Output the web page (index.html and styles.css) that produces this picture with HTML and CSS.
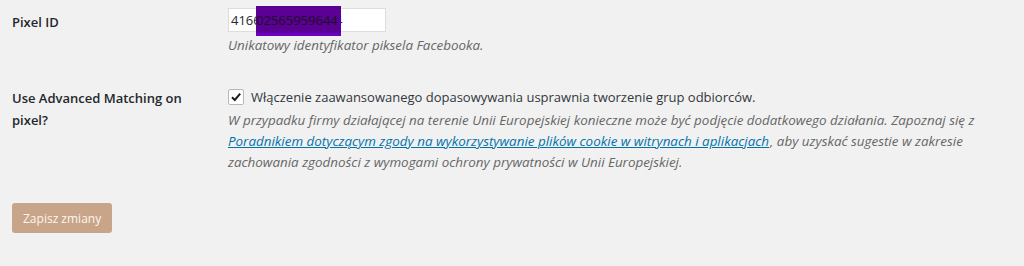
FILE: index.html
```html
<!DOCTYPE html>
<html lang="pl">
<head>
    <meta charset="UTF-8">
    <title>Ustawienia piksela</title>
    <link rel="stylesheet" href="styles.css">
</head>
<body>
    <form class="settings">
        <div class="row">
            <div class="label">Pixel ID</div>
            <div class="field">
                <div class="input-wrap">
                    <input class="text-input" type="text" value="416602565959644">
                    <span class="redact">02565959644</span>
                </div>
                <p class="desc">Unikatowy identyfikator piksela Facebooka.</p>
            </div>
        </div>

        <div class="row row-check">
            <div class="label">Use Advanced Matching on pixel?</div>
            <div class="field">
                <label class="check">
                    <span class="box">
                        <svg width="12" height="12" viewBox="0 0 12 12"><path d="M2 6.2 L4.8 9 L10.2 2.6" fill="none" stroke="#1e1e1e" stroke-width="2"/></svg>
                    </span>
                    Włączenie zaawansowanego dopasowywania usprawnia tworzenie grup odbiorców.
                </label>
                <p class="desc">W przypadku firmy działającej na terenie Unii Europejskiej konieczne może być podjęcie dodatkowego działania. Zapoznaj się z<br><a href="#">Poradnikiem dotyczącym zgody na wykorzystywanie plików cookie w witrynach i aplikacjach</a>, aby uzyskać sugestie w zakresie zachowania zgodności z wymogami ochrony prywatności w Unii Europejskiej.</p>
            </div>
        </div>

        <button class="save" type="button">Zapisz zmiany</button>
    </form>
</body>
</html>
```

FILE: styles.css
```css
body {
    margin: 0;
    background: #f1f1f1;
    font-family: "Open Sans", sans-serif;
    font-size: 13px;
    color: #23282d;
}
.settings {
    padding: 0 12px;
}
.row {
    display: flex;
    padding-top: 8px;
}
.label {
    width: 216px;
    font-weight: 600;
    font-size: 13px;
    line-height: 22px;
    padding-top: 3px;
}
.field {
    flex: 1;
}
.input-wrap {
    position: relative;
    width: 158px;
}
.text-input {
    box-sizing: border-box;
    width: 158px;
    height: 24px;
    margin: 0;
    padding: 0 2px;
    border: 1px solid #ddd;
    background: #fff;
    font-family: "Open Sans", sans-serif;
    font-size: 13px;
    color: #23282d;
    outline: none;
}
.redact {
    position: absolute;
    left: 28px;
    top: -2px;
    width: 85px;
    height: 30px;
    box-sizing: border-box;
    padding-top: 5px;
    background: #5b0094;
    border-bottom: 3px solid #6a00c4;
    font-size: 13px;
    color: #1a1024;
    overflow: hidden;
    white-space: nowrap;
}
.desc {
    margin: 3px 0 0;
    font-style: italic;
    color: #666;
    line-height: 21px;
    font-size: 13.4px;
}
.row-check {
    padding-top: 31px;
}
.row-check .label {
    padding-top: 0;
    width: 190px;
    margin-right: 26px;
}
.check {
    display: flex;
    align-items: center;
    gap: 7px;
    line-height: 20px;
    color: #32373c;
}
.box {
    box-sizing: border-box;
    width: 16px;
    height: 16px;
    border: 1px solid #b4b9be;
    border-radius: 2px;
    background: #fff;
    display: flex;
    align-items: center;
    justify-content: center;
}
.desc a {
    color: #0073aa;
    margin-right: 1px;
}
.save {
    margin-top: 30px;
    padding: 0 11px;
    height: 30px;
    border: 0;
    border-radius: 3px;
    background: #c8a488;
    color: #fbf6f1;
    font-family: "Open Sans", sans-serif;
    font-size: 12px;
}
```
